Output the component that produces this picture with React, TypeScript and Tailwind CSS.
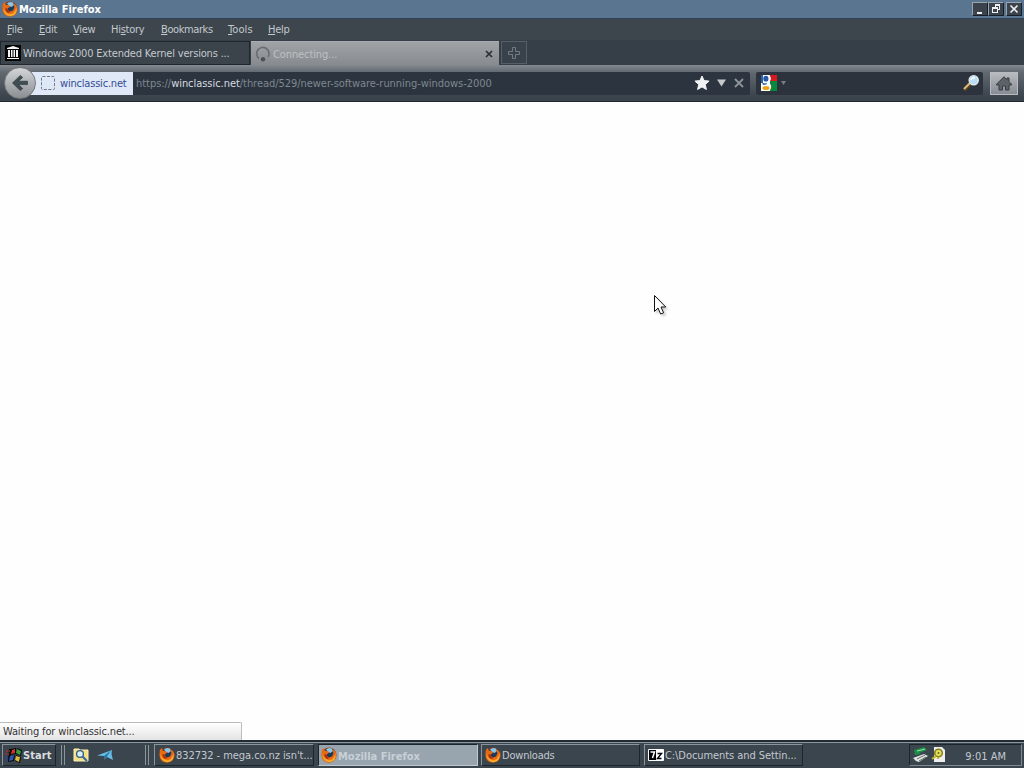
import React from "react";

function Firefox({ className = "size-4" }: { className?: string }) {
  return (
    <svg viewBox="0 0 16 16" className={`shrink-0 ${className}`}>
      <circle cx="8" cy="8" r="7.4" fill="#9c3b08" />
      <circle cx="8.4" cy="6.8" r="5.8" fill="#1d3a5c" />
      <path d="M5 2.5Q8 .2 11 1.6L12 4 9.5 6 7 5Z" fill="#8cc4e2" />
      <path d="M.8 3 2.8 1 3.6 3.6 6.8 4.3 8.2 5.8 6 7.2 6 9 8 10.6 11 9.6 12.4 6.4 11.4 2.5Q15.5 4 15.5 8.5C15 13 11.8 15.5 8 15.5 3 15.5.4 12 .5 7Z" fill="#e86a14" />
      <path d="M1.4 6Q2.4 12 8 13.2 12.6 13 14.6 6.4 15.5 14.6 8 15.2 1 14 1.4 6Z" fill="#f9ab2c" />
      <path d="M3.6 7 5.8 7.6 6 9.2 8.4 10.8 6 12Q2.8 10 3.6 7Z" fill="#a63309" />
    </svg>
  );
}

function WindowButton({ children, className = "" }: { children: React.ReactNode; className?: string }) {
  return (
    <div className={`flex h-[14px] w-4 items-center justify-center border border-t-[#9aa6af] border-l-[#9aa6af] border-r-[#17202a] border-b-[#17202a] bg-[#3b444d] ${className}`}>
      {children}
    </div>
  );
}

function Menu({ before = "", letter, after, className }: { before?: string; letter: string; after: string; className: string }) {
  return (
    <span className={`shrink-0 ${className}`}>
      {before}
      <span className="underline underline-offset-1">{letter}</span>
      {after}
    </span>
  );
}

function TaskButton({ children, className = "pl-1" }: { children: React.ReactNode; className?: string }) {
  return (
    <div className={`flex h-[22px] shrink-0 items-center gap-px border border-t-[#8a949c] border-l-[#8a949c] border-r-[#1c242c] border-b-[#1c242c] bg-[#3b454e] ${className}`}>
      {children}
    </div>
  );
}

export default function App() {
  return (
    <div className="relative flex h-[768px] w-[1024px] flex-col overflow-hidden bg-[#fefefe] font-['DejaVu_Sans_Condensed','DejaVu_Sans',sans-serif] text-[11px] leading-[14px] whitespace-nowrap text-[#c3c9ce] [font-stretch:condensed]">
      <header className="flex h-[18px] shrink-0 items-center bg-[#5a7590] pl-[2px] pr-[2px] text-white">
        <Firefox />
        <span className="ml-px pt-px text-[11px] font-bold">Mozilla Firefox</span>
        <div className="ml-auto flex">
          <WindowButton>
            <svg viewBox="0 0 12 12" className="size-3"><path d="M3 9h5v2H3z" fill="#eee" /></svg>
          </WindowButton>
          <WindowButton>
            <svg viewBox="0 0 12 12" className="size-3" shapeRendering="crispEdges"><path d="M5 1h5v2H5zM9 3h1v4H8V6h1zM5 3h1v1H5zM2 4h6v2H2zM2 6h1v4H2zM7 6h1v4H7zM3 9h4v1H3z" fill="#eee" /></svg>
          </WindowButton>
          <WindowButton className="ml-[2px]">
            <svg viewBox="0 0 12 12" className="size-3"><path d="m2.5 2.5 7 7m0-7-7 7" stroke="#eee" strokeWidth="1.7" /></svg>
          </WindowButton>
        </div>
      </header>

      <nav className="flex h-[22px] shrink-0 items-center border-t border-[#30405a] bg-[#3d454d] pl-[7px] tracking-[-0.25px]">
        <Menu letter="F" after="ile" className="w-8" />
        <Menu letter="E" after="dit" className="w-[34px]" />
        <Menu letter="V" after="iew" className="w-[38px]" />
        <Menu before="Hi" letter="s" after="tory" className="w-[50px]" />
        <Menu letter="B" after="ookmarks" className="w-[67px] tracking-[-0.4px]" />
        <Menu letter="T" after="ools" className="w-10 tracking-[0.1px]" />
        <Menu letter="H" after="elp" className="w-8" />
      </nav>

      <div className="flex h-[25px] shrink-0 bg-[#363f48] pt-px">
        <div className="flex w-[250px] items-center border border-[#20272e] bg-[#3b434b] pl-1">
          <svg viewBox="0 0 16 16" className="size-4 shrink-0"><path d="M0 0h16v16H0z" fill="#050505" /><path d="M2 4V3l6-2 6 2v1zM3 5h2v7H3zM6 5h1.5v7H6zM8.5 5H10v7H8.5zM11 5h2v7h-2zM2 13h12v1H2z" fill="#f5f5f5" /></svg>
          <span className="ml-[2px] pt-[2px] tracking-[-0.18px]">Windows 2000 Extended Kernel versions ...</span>
        </div>
        <div className="ml-px flex w-[248px] items-center border-t border-[#a9adb0] bg-linear-to-b from-[#a0a3a6] to-[#878b90] pl-1">
          <svg viewBox="0 0 16 16" className="size-4"><path d="M4 12.5A6.2 6.2 0 1 1 13 11" fill="none" stroke="#696e73" strokeWidth="1.7" /><circle cx="8" cy="13.2" r="2.2" fill="#4c5054" /></svg>
          <span className="ml-[2px] pt-[2px] tracking-[-0.1px] text-[#bdc1c5]">Connecting...</span>
          <svg viewBox="0 0 8 8" className="mr-[6px] ml-auto size-2"><path d="m1 1 6 6m0-6L1 7" stroke="#2c3034" strokeWidth="1.7" /></svg>
        </div>
        <div className="ml-[2px] flex h-[23px] w-[26px] items-center justify-center border border-[#565f67] bg-[#39424b]">
          <svg viewBox="0 0 12 12" className="size-3"><path d="M4.5.5h3v4h4v3h-4v4h-3v-4h-4v-3h4z" fill="none" stroke="#727b82" /></svg>
        </div>
      </div>

      <div className="flex h-[37px] shrink-0 items-center border-b border-[#20262d] bg-linear-to-b from-[#858a8f] via-[#626971] via-20% to-[#3a434c] to-90% pl-1">
        <div className="z-10 flex size-8 shrink-0 items-center justify-center rounded-full border border-[#777] bg-linear-to-b from-[#d4d6d8] to-[#8b8f93]">
          <svg viewBox="0 0 18 16" className="h-4 w-[18px]"><path d="M16.5 6.2v3.4H7.5l4.2 4-2.4 2L1.5 8 9.3.4l2.4 2-4.2 3.8z" fill="#3f4c52" stroke="#273238" strokeWidth=".6" /></svg>
        </div>
        <div className="-ml-2 flex h-[23px] w-[722px] items-center rounded-r-xs bg-[#2c353f]">
          <div className="flex h-[23px] w-[105px] shrink-0 items-center bg-[#dfe8f7] pl-[13px] text-[#344c91]">
            <svg viewBox="0 0 14 14" className="size-[14px]"><rect x=".5" y=".5" width="13" height="13" rx="1" fill="none" stroke="#717985" strokeDasharray="3 1.5" /></svg>
            <span className="ml-[5px] pt-[2px] tracking-[-0.2px]">winclassic.net</span>
          </div>
          <span className="ml-[3px] pt-[2px] tracking-[-0.045px] text-[#7f878f]">https://<span className="text-[#d7dbe0]">winclassic.net</span>/thread/529/newer-software-running-windows-2000</span>
          <svg viewBox="0 0 16 16" className="mr-[7px] ml-auto size-4"><path d="m8 1 2.1 4.6 5 .5-3.8 3.4 1.1 5L8 11.9l-4.4 2.6 1.1-5L.9 6.1l5-.5z" fill="#f1f2f4" stroke="#f1f2f4" strokeWidth="1" strokeLinejoin="round" /></svg>
          <svg viewBox="0 0 10 8" className="mr-[8px] h-2 w-[9px]"><path d="M0 0h10L5 8z" fill="#c5c9cd" /></svg>
          <svg viewBox="0 0 10 10" className="mr-[6px] size-[10px]"><path d="m1 1 8 8m0-8L1 9" stroke="#8e9499" strokeWidth="1.8" /></svg>
        </div>
        <div className="ml-[6px] flex h-[23px] w-[227px] items-center rounded-xs bg-[#2c333d] pl-[5px]">
          <svg viewBox="0 0 16 16" className="size-4">
            <path d="M0 0h10v16H0z" fill="#fff" />
            <path d="M9 0h7v6H9z" fill="#d81920" />
            <path d="M9 6h7v10H9z" fill="#07883e" />
            <path d="M0 0h2v8H0z" fill="#315eab" />
            <path d="M9 1Q11 4 8.5 6.6L8 8Q10.8 10 10 13 9.5 15 8 16H5V1z" fill="#fff" />
            <ellipse cx="4.9" cy="3.7" rx="2.6" ry="2.9" fill="#245aa3" />
            <path d="M1 7.5Q3 9 6 7.7L5.4 9.5 2 10z" fill="#2c62ad" />
            <ellipse cx="5" cy="13" rx="3.6" ry="2.1" fill="#efa31d" />
          </svg>
          <svg viewBox="0 0 5 4" className="ml-[4px] h-[4px] w-[5px]"><path d="M0 0h5L2.5 4z" fill="#777f86" /></svg>
          <svg viewBox="0 0 16 16" className="mr-1 ml-auto size-4"><path d="m1 15 6-6" stroke="#594321" strokeWidth="4" /><path d="m1 14 6-6" stroke="#d6bd7e" strokeWidth="2" /><circle cx="10.7" cy="5.3" r="4.6" fill="#b9def5" stroke="#e5edf2" strokeWidth="1.3" /><path d="M8 5q1-3 4-2" fill="none" stroke="#fff" strokeWidth="1.4" /></svg>
        </div>
        <div className="ml-[7px] flex h-[23px] w-[28px] items-center justify-center border border-[#b7babe] bg-linear-to-b from-[#b8bbc0] to-[#888c93]">
          <svg viewBox="0 0 16 15" className="h-[15px] w-4"><path d="M.5 8.2 8 .8 11 3.7V2h2v3.7l2.5 2.5V9H13v5H9.5v-4h-3v4H3V9H.5z" fill="#5c6267" stroke="#353b40" /></svg>
        </div>
      </div>

      <main className="flex flex-1 items-end bg-[#fefefe]">
        <div className="flex h-[18px] w-[242px] items-center rounded-tr-[2px] border-t border-r border-[#bbb] bg-linear-to-b from-white to-[#e4e4e4] pt-px pl-[3px] tracking-[-0.14px] text-[#333]">Waiting for winclassic.net...</div>
      </main>

      <footer className="flex h-[28px] shrink-0 items-center border-t-2 border-[#242c33] bg-[#3b454e] pl-[2px] shadow-[inset_0_1px_0_#8b959c]">
        <TaskButton className="w-[54px] pl-[2px]">
          <svg viewBox="0 0 17 16" className="h-4 w-[17px] shrink-0"><path d="m6 2 5-1v6L5 8zM12 1l5 2-1 6-5-2zM5 9l5-1-1 6-6 1zM11 8l5 2-1 6-5-2zM4 2h2v12H3z" fill="#080808" /><path d="m7 3 3-1v4L6 7z" fill="#d0352a" /><path d="m12 2 4 2-1 4-4-2z" fill="#3d9e38" /><path d="m5 9 4-1-1 5-4 1z" fill="#2b57b8" /><path d="m11 9 4 1-1 5-4-2z" fill="#ddb93c" /><path d="M1 4h4M0 7h4" stroke="#a82c28" strokeWidth="1.5" strokeDasharray="2 1" /><path d="M0 10h3M0 13h3" stroke="#2c459c" strokeWidth="1.5" strokeDasharray="2 1" /></svg>
          <span className="pt-px font-bold tracking-[0.1px] text-[#dadddf]">Start</span>
        </TaskButton>
        <div className="ml-[5px] h-5 w-1 border-x border-[#8b949b]" />
        <svg viewBox="0 0 16 16" className="ml-2 size-4"><path d="M1 2h5l1 1h8v11H1z" fill="#f1df83" stroke="#f9f2b7" /><circle cx="7" cy="7" r="3.4" fill="#d5eff5" stroke="#315b83" strokeWidth="1.3" /><path d="m9.5 9.5 4.5 4.5" stroke="#3268a8" strokeWidth="2" /></svg>
        <svg viewBox="0 0 17 14" className="ml-[8px] h-[14px] w-[17px]"><path d="M0 7.5 15 2l-.5 4 1.5 6-3-1.5L10 9l-3 2.5V8z" fill="#66bce5" /><path d="m7 8 7-5.5L9.5 9 7 12z" fill="#2775a4" /></svg>
        <div className="ml-[31px] h-5 w-1 border-x border-[#8b949b]" />
        <TaskButton className="ml-[5px] w-[160px] pl-1">
          <Firefox /><span className="pt-px tracking-[-0.05px]">832732 - mega.co.nz isn't...</span>
        </TaskButton>
        <div className="ml-[4px] flex h-[22px] w-[160px] shrink-0 items-center gap-px border border-t-[#1c242c] border-l-[#1c242c] border-r-[#c0c9d0] border-b-[#c0c9d0] bg-[#98a5af] pl-[2px]">
          <Firefox /><span className="pt-[3px] font-bold text-[#c8d0d6]">Mozilla Firefox</span>
        </div>
        <TaskButton className="ml-[3px] w-[159px] pl-[3px]"><Firefox /><span className="pt-px tracking-[-0.2px]">Downloads</span></TaskButton>
        <TaskButton className="ml-[4px] w-[159px] pl-[3px]">
          <svg viewBox="0 0 16 12" className="h-3 w-4 shrink-0"><path d="M.5.5h15v11H.5z" fill="#000" stroke="#fff" /><path d="M8 1h7v10H8z" fill="#fff" /><path d="M2.5 3h4l-2 6" fill="none" stroke="#fff" strokeWidth="1.5" /><path d="M9.5 4.5h4l-4 5h4" fill="none" stroke="#000" strokeWidth="1.4" /></svg>
          <span className="pt-px tracking-[-0.07px]">C:\Documents and Settin...</span>
        </TaskButton>
        <div className="mr-[2px] ml-auto flex h-[22px] w-[113px] items-center border border-t-[#1c242c] border-l-[#1c242c] border-r-[#7f8990] border-b-[#7f8990] pl-[3px]">
          <svg viewBox="0 0 16 16" className="size-4"><path d="M1 3 11 0l3 3-8 3 2 1-6 1z" fill="#1b9147" /><path d="m4 4 8-2" stroke="#9edfaa" /><path d="m0 11 11-4 4 2-9 6-3-1z" fill="#e2e4e2" /><path d="m4 12 8-4M6 14l7-4" stroke="#64706a" /></svg>
          <svg viewBox="0 0 14 16" className="ml-[2px] h-4 w-[14px]"><path d="M3 0h8l3 3v12H3z" fill="#eee" /><circle cx="7.5" cy="6" r="3.8" fill="#e2df62" stroke="#858215" strokeWidth="1.6" /><circle cx="7.5" cy="6" r="1" fill="#686510" /><path d="m5 9-4 3M7 10v2" stroke="#bdb92a" strokeWidth="2" /></svg>
          <span className="mt-[3px] mr-[15px] ml-auto">9:01 AM</span>
        </div>
      </footer>

      <svg viewBox="0 0 14 22" className="absolute top-[295px] left-[654px] h-[22px] w-[14px] drop-shadow-[2px_2px_1px_#0003]"><path d="M.5.5v16l3.5-3.5 2.6 6 3-1.2L7 12h4.7z" fill="white" stroke="#111" /></svg>
    </div>
  );
}
